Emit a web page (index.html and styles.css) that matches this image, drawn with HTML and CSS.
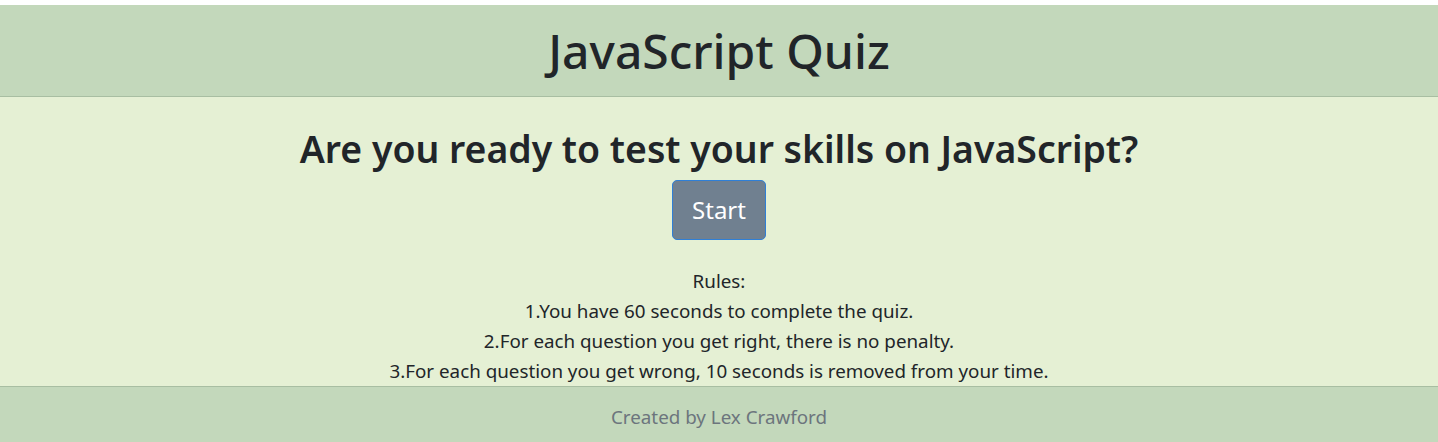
FILE: index.html
```html
<!DOCTYPE html>
<html lang="en">
<head>
<meta charset="utf-8">
<title>JavaScript Quiz</title>
<link rel="stylesheet" href="styles.css">
</head>
<body>
<header class="site-header">
  <h1 class="site-title">JavaScript Quiz</h1>
</header>
<main class="intro">
  <h2 class="intro-question">Are you ready to test your skills on JavaScript?</h2>
  <button class="start-btn" type="button">Start</button>
  <div class="rules">
    <p>Rules:</p>
    <p>1.You have 60 seconds to complete the quiz.</p>
    <p>2.For each question you get right, there is no penalty.</p>
    <p>3.For each question you get wrong, 10 seconds is removed from your time.</p>
  </div>
</main>
<footer class="site-footer">
  <p>Created by Lex Crawford</p>
</footer>
</body>
</html>
```
FILE: styles.css
```css
* { box-sizing: border-box; }
html, body { margin: 0; padding: 0; }
body {
  padding-top: 5px;
  background: #ffffff;
  font-family: "Noto Sans", "Open Sans", sans-serif;
  color: #212529;
  height: 442px;
  overflow: hidden;
  display: flex;
  flex-direction: column;
}
.site-header {
  background: #c3d8bb;
  height: 93px;
  padding-top: 2px;
  border-bottom: 1px solid #a8bea2;
  display: flex;
  align-items: center;
  justify-content: center;
}
.site-title {
  margin: 0;
  font-size: 48px;
  font-weight: 500;
  line-height: 1;
}
.intro {
  background: #e5f0d4;
  flex: 1;
  display: flex;
  flex-direction: column;
  align-items: center;
  padding-top: 28px;
}
.intro-question {
  margin: 0;
  font-size: 37.4px;
  font-weight: 600;
  line-height: 48px;
}
.start-btn {
  margin-top: 7px;
  width: 94px;
  height: 60px;
  background: #708090;
  color: #ffffff;
  border: 1px solid #2f7fd6;
  border-radius: 5px;
  font-family: inherit;
  font-size: 24px;
  padding: 0;
}
.rules {
  margin-top: 26px;
  text-align: center;
  font-size: 18.8px;
  line-height: 30px;
}
.rules p { margin: 0; }
.site-footer {
  background: #c3d8bb;
  height: 57px;
  border-top: 1px solid #a8bea2;
  text-align: center;
  padding-top: 18px;
}
.site-footer p {
  margin: 0;
  color: #6c757d;
  font-size: 18.8px;
  line-height: 24px;
}
```
